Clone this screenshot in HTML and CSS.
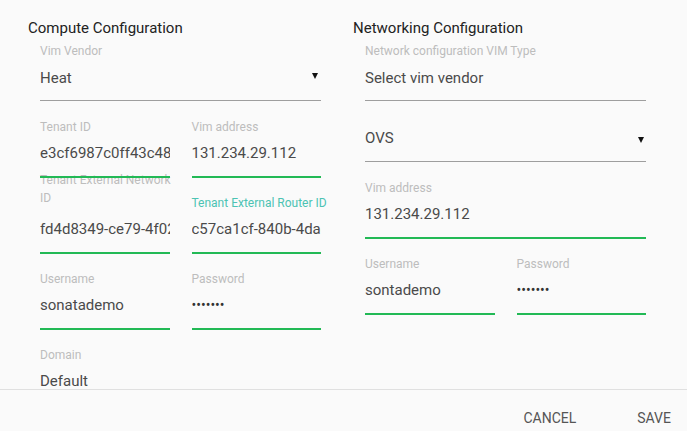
FILE: index.html
```html
<!DOCTYPE html>
<html lang="en">
<head>
<meta charset="utf-8">
<title>VIM configuration</title>
<link rel="stylesheet" href="styles.css">
</head>
<body>
<div class="dialog">
  <div class="content">
    <section class="col">
      <h2 class="title">Compute Configuration</h2>
      <div class="field field--first field--gap">
        <div class="label">Vim Vendor</div>
        <div class="select">
          <div class="value">Heat</div>
          <span class="arrow"></span>
        </div>
      </div>
      <div class="row">
        <div class="field field--valid field--over">
          <div class="label">Tenant ID</div>
          <div class="value">e3cf6987c0ff43c48a1b2c3d4e5f</div>
        </div>
        <div class="field field--valid">
          <div class="label">Vim address</div>
          <div class="value">131.234.29.112</div>
        </div>
      </div>
      <div class="row">
        <div class="field field--valid">
          <div class="label label--tall">Tenant External Network<br>ID</div>
          <div class="value">fd4d8349-ce79-4f02-9a1b-2c3d4e5f</div>
        </div>
        <div class="field field--valid">
          <div class="label label--focus">Tenant External Router ID</div>
          <div class="value">c57ca1cf-840b-4dae-8a1b-2c3d</div>
        </div>
      </div>
      <div class="row">
        <div class="field field--valid">
          <div class="label">Username</div>
          <div class="value">sonatademo</div>
        </div>
        <div class="field field--valid">
          <div class="label">Password</div>
          <div class="value value--dots">•••••••</div>
        </div>
      </div>
      <div class="field field--plain">
        <div class="label">Domain</div>
        <div class="value">Default</div>
      </div>
    </section>
    <section class="col">
      <h2 class="title">Networking Configuration</h2>
      <div class="field field--first">
        <div class="label">Network configuration VIM Type</div>
        <div class="value">Select vim vendor</div>
      </div>
      <div class="field field--nolabel field--gap">
        <div class="select">
          <div class="value">OVS</div>
          <span class="arrow arrow--right"></span>
        </div>
      </div>
      <div class="field field--valid">
        <div class="label">Vim address</div>
        <div class="value">131.234.29.112</div>
      </div>
      <div class="row">
        <div class="field field--valid">
          <div class="label">Username</div>
          <div class="value">sontademo</div>
        </div>
        <div class="field field--valid">
          <div class="label">Password</div>
          <div class="value value--dots">•••••••</div>
        </div>
      </div>
    </section>
  </div>
  <footer class="actions">
    <button class="btn" type="button">Cancel</button>
    <button class="btn" type="button">Save</button>
  </footer>
</div>
</body>
</html>
```
FILE: styles.css
```css
* { box-sizing: border-box; }
html, body {
  margin: 0;
  padding: 0;
  background: #fafafa;
  overflow: hidden;
}
body {
  font-family: Roboto, "Liberation Sans", Arial, sans-serif;
  color: #212121;
}
.dialog {
  width: 687px;
  height: 431px;
}
.content {
  height: 390px;
  overflow: hidden;
  border-bottom: 1px solid #e0e0e0;
  display: grid;
  grid-template-columns: 325px 325px;
  padding-left: 28px;
}
.col {
  display: flex;
  flex-direction: column;
}
.title {
  margin: 0;
  padding-top: 19px;
  font-size: 15px;
  line-height: 18px;
  font-weight: 400;
  color: #222;
}
.col > .field,
.col > .row {
  margin-left: 12px;
  width: 281px;
}
.row {
  display: grid;
  grid-template-columns: 1fr 1fr;
  column-gap: 22px;
}
.field {
  display: flex;
  flex-direction: column;
  min-width: 0;
}
.field--first {
  padding-top: 6px;
  padding-bottom: 12px;
  border-bottom: 1px solid #9e9e9e;
}
.field--first .value { margin-top: 9px; }
.field--gap { margin-bottom: 1px; }
.field--valid {
  padding-top: 17px;
  padding-bottom: 13px;
  border-bottom: 2px solid #22b955;
}
.field--valid .value,
.field--plain .value { margin-top: 8px; }
.field--plain { padding-top: 17px; }
.field--over {
  position: relative;
  z-index: 1;
}
.field--nolabel {
  padding-top: 27px;
  padding-bottom: 13px;
  border-bottom: 1px solid #9e9e9e;
}
.label {
  font-size: 12px;
  line-height: 16px;
  height: 16px;
  color: #bdbdbd;
  white-space: nowrap;
}
.label--tall {
  margin-top: -24px;
  height: 40px;
  line-height: 18px;
}
.label--focus { color: #4cc3b3; }
.value {
  font-size: 15px;
  line-height: 20px;
  height: 20px;
  color: #4a4a4a;
  white-space: nowrap;
  overflow: hidden;
}
.value--dots {
  color: #333;
  font-size: 14px;
}
.select {
  display: flex;
  align-items: center;
}
.select .value { flex: 1; }
.arrow {
  width: 0;
  height: 0;
  border-left: 3px solid transparent;
  border-right: 3px solid transparent;
  border-top: 6px solid #111;
  margin-right: 3px;
  margin-top: 5px;
}
.arrow--right {
  margin-right: 2px;
  margin-top: 4px;
}
.actions {
  display: flex;
  justify-content: flex-end;
  align-items: center;
  gap: 61px;
  padding-top: 18px;
  padding-right: 16px;
}
.btn {
  font-family: Roboto, "Liberation Sans", Arial, sans-serif;
  font-size: 14px;
  line-height: 20px;
  height: 20px;
  padding: 0;
  margin: 0;
  border: 0;
  background: transparent;
  color: #555;
  text-transform: uppercase;
  cursor: pointer;
}
```
